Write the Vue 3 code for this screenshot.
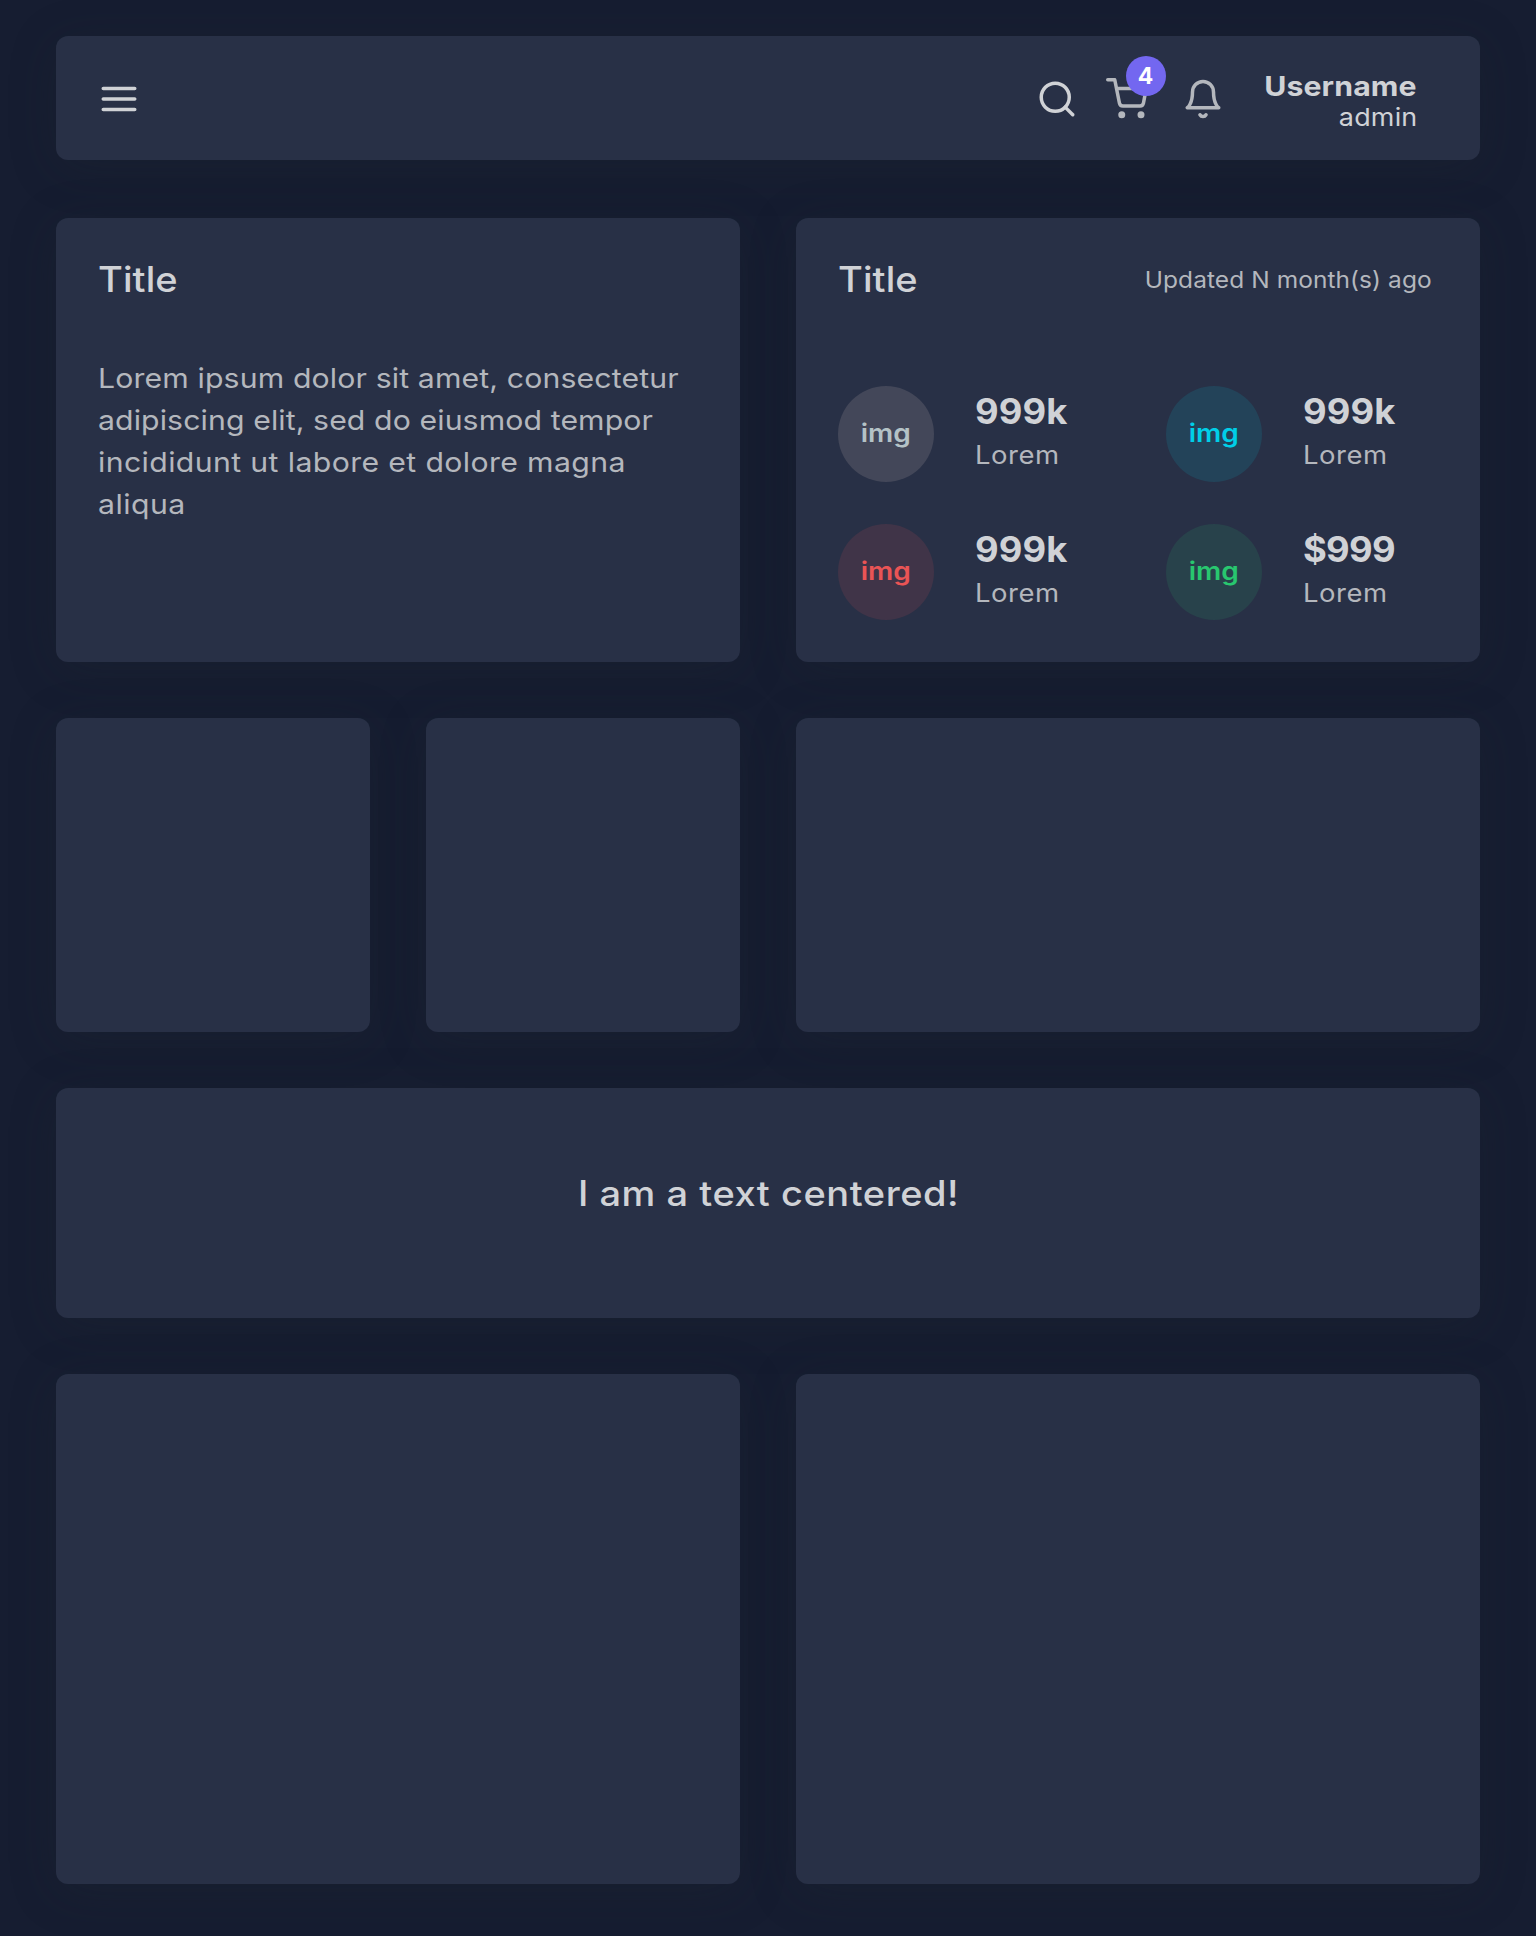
<script setup>
const stats = [
  { tone: 'muted', value: '999k', label: 'Lorem' },
  { tone: 'info', value: '999k', label: 'Lorem' },
  { tone: 'danger', value: '999k', label: 'Lorem' },
  { tone: 'success', value: '$999', label: 'Lorem', money: true },
]
</script>

<template>
  <div class="page">
    <header class="card navbar">
      <svg class="icon bright" viewBox="0 0 24 24"><path d="M3 12h18M3 6h18M3 18h18" /></svg>
      <div class="actions">
        <svg class="icon bright" viewBox="0 0 24 24"><circle cx="11" cy="11" r="8" /><path d="M21 21l-4.35-4.35" /></svg>
        <div class="cart">
          <svg class="icon" viewBox="0 0 24 24"><circle cx="9" cy="21" r="1" /><circle cx="20" cy="21" r="1" /><path d="M1 1h4l2.68 13.39a2 2 0 0 0 2 1.61h9.72a2 2 0 0 0 2-1.61L23 6H6" /></svg>
          <span class="badge">4</span>
        </div>
        <svg class="icon bell" viewBox="0 0 24 24"><path d="M18 8A6 6 0 0 0 6 8c0 7-3 9-3 9h18s-3-2-3-9" /><path d="M13.73 21a2 2 0 0 1-3.46 0" /></svg>
        <div class="user">
          <span class="name">Username</span>
          <span class="role">admin</span>
        </div>
      </div>
    </header>

    <main class="grid">
      <section class="card half intro">
        <h2>Title</h2>
        <p>
          <span class="line first">Lorem ipsum dolor sit amet, consectetur </span>
          <span class="line second">adipiscing elit, sed do eiusmod tempor </span>
          <span class="line third">incididunt ut labore et dolore magna </span>
          <span class="line last">aliqua</span>
        </p>
      </section>

      <section class="card half">
        <div class="head">
          <h2>Title</h2>
          <span class="updated">Updated N month(s) ago</span>
        </div>
        <div class="stats">
          <div v-for="(s, i) in stats" :key="i" class="stat">
            <span class="avatar" :class="s.tone"><span class="avatar-text">img</span></span>
            <div class="figures">
              <span class="value" :class="{ money: s.money }">{{ s.value }}</span>
              <span class="label">{{ s.label }}</span>
            </div>
          </div>
        </div>
      </section>

      <section class="card quarter"></section>
      <section class="card quarter"></section>
      <section class="card half"></section>
      <section class="card full"><span class="centered">I am a text centered!</span></section>
      <section class="card half tall"></section>
      <section class="card half tall"></section>
    </main>
  </div>
</template>

<style>
body {
  background: #161d31;
}
</style>

<style scoped>
.page {
  box-sizing: border-box;
  height: 1936px;
  padding: 36px 56px 52px;
  font-family: Inter, "Liberation Sans", sans-serif;
  color: #b4b7bd;
  background: #161d31;
}
.card {
  box-sizing: border-box;
  padding: 42px;
  border-radius: 12px;
  background: #283046;
  box-shadow: 0 8px 48px rgba(34, 41, 47, 0.24);
}
.navbar {
  display: flex;
  align-items: flex-start;
  justify-content: space-between;
  height: 124px;
  margin-bottom: 58px;
}
.actions {
  display: flex;
  align-items: flex-start;
}
.icon {
  display: block;
  width: 42px;
  height: 42px;
  fill: none;
  stroke: #b4b7bd;
  stroke-width: 2;
  stroke-linecap: round;
  stroke-linejoin: round;
  overflow: visible;
}
.icon.bright {
  stroke: #d0d2d6;
}
.cart {
  position: relative;
  margin-left: 28px;
}
.bell {
  margin-left: 34px;
}
.badge {
  position: absolute;
  top: -22px;
  left: 20px;
  width: 40px;
  height: 40px;
  border-radius: 50%;
  background: #7367f0;
  color: #fff;
  font-size: 23px;
  font-weight: 700;
  line-height: 40px;
  text-align: center;
  text-indent: -1px;
}
.user {
  display: flex;
  flex-direction: column;
  align-items: flex-end;
  width: 173px;
  margin: -8px 21px 0 20px;
  color: #d0d2d6;
}
.name {
  font-size: 27.5px;
  font-weight: 650;
  line-height: 32px;
  letter-spacing: 0.1px;
  transform: scaleX(1.1);
  transform-origin: right;
}
.role {
  font-size: 24.5px;
  line-height: 31px;
  letter-spacing: 0.17px;
  transform: scaleX(1.1);
  transform-origin: right;
}
.grid {
  display: grid;
  grid-template-columns: repeat(4, 1fr);
  grid-template-rows: 444px 314px 230px 510px;
  gap: 56px;
}
.half {
  grid-column: span 2;
}
.full {
  grid-column: span 4;
  padding: 83px 0 0 2px;
  text-align: center;
}
.centered {
  display: inline-block;
  color: #d0d2d6;
  font-size: 35.2px;
  font-weight: 500;
  line-height: 44px;
  letter-spacing: 0.5px;
  transform: scaleX(1.08);
}
h2 {
  margin: 0;
  color: #d0d2d6;
  font-size: 35.2px;
  font-weight: 500;
  line-height: 38px;
  letter-spacing: 0.1px;
  transform: scaleX(1.08);
  transform-origin: left;
}
.intro p {
  margin: 59px 0 0;
  font-size: 27.5px;
  line-height: 42px;
}
.line {
  display: block;
  white-space: nowrap;
  transform: scaleX(1.1);
  transform-origin: left;
}
.first {
  letter-spacing: 0.11px;
}
.second {
  letter-spacing: 0.08px;
}
.third {
  letter-spacing: 0.33px;
}
.last {
  letter-spacing: 0.4px;
}
.head {
  display: flex;
  align-items: center;
  justify-content: space-between;
}
.updated {
  margin: 1px 6px 0 0;
  font-size: 23.1px;
  line-height: 36px;
  letter-spacing: 0.07px;
  transform: scaleX(1.06);
  transform-origin: right;
}
.stats {
  display: grid;
  grid-template-columns: 328px auto;
  row-gap: 42px;
  margin-top: 88px;
}
.stat {
  display: flex;
  align-items: center;
  gap: 41px;
  height: 96px;
}
.avatar {
  width: 96px;
  height: 96px;
  border-radius: 50%;
  font-size: 25.5px;
  font-weight: 600;
  line-height: 94px;
  text-align: center;
}
.avatar-text {
  display: inline-block;
  transform: scaleX(1.1);
}
.muted {
  color: #b4c2c6;
  background: #434759;
}
.info {
  color: #00cfe8;
  background: #234359;
}
.danger {
  color: #ea5455;
  background: #403448;
}
.success {
  color: #28c76f;
  background: #28424b;
}
.figures {
  display: flex;
  flex-direction: column;
  gap: 3px;
  padding-bottom: 5px;
}
.value {
  color: #d0d2d6;
  font-size: 35px;
  font-weight: 650;
  line-height: 44px;
  letter-spacing: 0.1px;
  transform: scaleX(1.04);
  transform-origin: left;
}
.value.money {
  letter-spacing: -0.7px;
}
.label {
  font-size: 25px;
  line-height: 38px;
  letter-spacing: 0.45px;
  transform: scaleX(1.1);
  transform-origin: left;
}
</style>
